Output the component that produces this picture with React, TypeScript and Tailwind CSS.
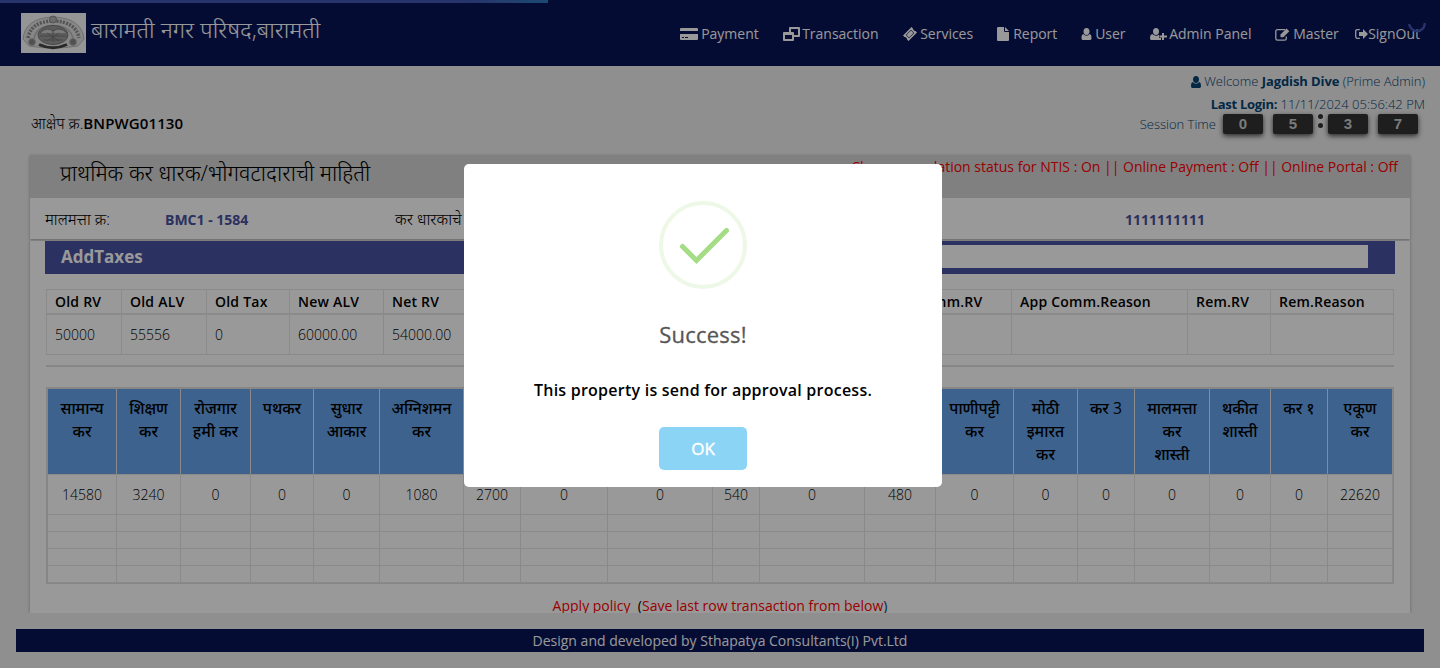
import { Fragment } from 'react';

const nav = 'flex items-center whitespace-nowrap';

function Svg({ w, h, vb, d, className = '' }: { w: number; h: number; vb: string; d: string; className?: string }) {
  return (
    <svg width={w} height={h} viewBox={vb} fill="currentColor" fillRule="evenodd" className={className}>
      <path d={d} />
    </svg>
  );
}

const userPath =
  'M5 0C7 0 8 1.500 8 3.400 8 5.400 6.800 7 5 7S2 5.400 2 3.400C2 1.500 3 0 5 0ZM2 6C2.800 7.200 3.800 7.700 5 7.700S7.200 7.200 8 6C9.600 6.200 10 8 10 10.200 10 11.400 9.300 12 8.300 12H1.700C.7 12 0 11.400 0 10.200 0 8 .4 6.200 2 6Z';

function Nav() {
  return (
    <nav className="mt-px flex h-[66px] text-[14px] leading-5 text-white">
      <span className={nav + ' w-[103px]'}>
        <Svg w={18} h={12} vb="0 0 18 12" className="mr-[3px]" d="M1 0H17Q18 0 18 1V3H0V1Q0 0 1 0ZM0 6H18V11Q18 12 17 12H1Q0 12 0 11ZM2 9V10H4V9ZM5 9V10H8V9Z" />
        Payment
      </span>
      <span className={nav + ' w-[120px]'}>
        <Svg w={17} h={14} vb="0 0 17 14" className="mr-[2px]" d="M7 0H16Q17 0 17 1V9Q17 10 16 10H11V13Q11 14 10 14H1Q0 14 0 13V6Q0 5 1 5H6V1Q6 0 7 0ZM8 2V5H10Q11 5 11 6V8H15V2ZM2 8V12H9V8Z" />
        Transaction
      </span>
      <span className={nav + ' w-[94px]'}>
        <Svg w={14} h={14} vb="0 0 14 14" className="mr-[3px]" d="M8.500 0L10 1.500C9.700 2.500 11.300 4.200 12.500 3.900L14 5.500L5.500 14L4 12.500C4.400 11.400 2.700 9.600 1.500 10L0 8.500ZM8 2.800L2.800 8L6 11.200L11.200 6ZM8 3.600L10.400 6L6 10.400L3.600 8Z" />
        Services
      </span>
      <span className={nav + ' w-[84px]'}>
        <Svg w={12} h={14} vb="0 0 12 14" className="mr-[4px]" d="M0 1Q0 0 1 0H7V4Q7 5 8 5H12V13Q12 14 11 14H1Q0 14 0 13ZM8 0L12 4H8Z" />
        Report
      </span>
      <span className={nav + ' w-[69px]'}>
        <Svg w={11} h={12} vb="0 0 10 12" className="mr-[3px]" d={userPath} />
        User
      </span>
      <span className={nav + ' w-[125px]'}>
        <svg width="17" height="13" viewBox="0 0 17 13" fill="currentColor" className="mr-[2px]">
          <path d="M6 0C8 0 9 1.500 9 3.400 9 5.400 7.800 7 6 7S3 5.400 3 3.400C3 1.500 4 0 6 0ZM2.500 6C3.500 7.200 4.800 7.700 6 7.700S8 7.400 9 6.500V10H11V12H1.700C.7 12 0 11.400 0 10.200 0 8 .7 6.200 2.500 6Z" />
          <path d="M12 5H14V7.500H17V9.500H14V12H12V9.500H9.500V7.500H12Z" />
        </svg>
        Admin Panel
      </span>
      <span className={nav + ' w-[80px]'}>
        <svg width="15" height="13" viewBox="0 0 15 13" fill="none" stroke="currentColor" className="mr-[3px]">
          <path d="M10 1.700H2.500Q.8 1.700.8 3.300V10.500Q.8 12.200 2.500 12.200H9.600Q11.300 12.200 11.300 10.500V8.500" strokeWidth="1.300" />
          <path d="M5.500 6.500L11.500.5L14.300 3.300L8.300 9.300H5.500Z" fill="currentColor" stroke="none" />
        </svg>
        Master
      </span>
      <span className={nav}>
        <svg width="13" height="12" viewBox="0 0 13 12" fill="none" stroke="currentColor">
          <path d="M4.800 1.600H2.400Q.7 1.600.7 3.200V8.800Q.7 10.400 2.400 10.400H4.800" strokeWidth="1.300" />
          <path d="M8 1L13 6L8 11V8H4V4H8Z" fill="currentColor" stroke="none" />
        </svg>
        SignOut
      </span>
    </nav>
  );
}

function Emblem() {
  return (
    <svg width="65" height="40" viewBox="0 0 65 40" className="mt-[13px] shrink-0 bg-[#f8f8f8]">
      <path d="M2 26Q4 5 32 4Q61 5 63 26L57 33Q32 37 8 33Z" fill="#e2e2e2" stroke="#bbb" />
      <path d="M7 25Q10 8.500 32 8Q55 8.500 58 25" fill="none" stroke="#8a8a8a" strokeWidth="3.500" strokeDasharray="2 1.300" />
      <path d="M13 26Q15 13 32 12.500Q50 13 52 26" fill="none" stroke="#b5b5b5" strokeWidth="1.500" />
      <ellipse cx="32" cy="22" rx="15" ry="9.500" fill="#9c9c9c" stroke="#777" />
      <path d="M19 20Q26 13 32 18Q39 13 46 20" fill="#ccc" stroke="#777" />
      <path d="M19 23H45M22 27H42M32 17V29M26 20L38 28M38 20L26 28" stroke="#777" fill="none" strokeWidth="1" />
      <circle cx="32" cy="6.500" r="3.500" fill="#b5b5b5" stroke="#888" />
      <circle cx="11" cy="29" r="3.500" fill="#888" stroke="#b5b5b5" />
      <circle cx="52" cy="29" r="3.500" fill="#888" stroke="#b5b5b5" />
      <path d="M18 31.500Q32 38 46 31.500" stroke="#444" strokeWidth="3" fill="none" />
    </svg>
  );
}

function Digit({ v, className = '' }: { v: string; className?: string }) {
  return (
    <span
      className={
        'flex h-5 w-10 items-center justify-center rounded-[2px] bg-[#333] font-["Liberation_Sans"] text-[15px] font-bold text-[#ccc] shadow-[0_2px_5px_rgba(0,0,0,0.7)] ' +
        className
      }
    >
      {v}
    </span>
  );
}

const taxCols: [string, string, number][] = [
  ['Old RV', '50000', 75],
  ['Old ALV', '55556', 85],
  ['Old Tax', '0', 83],
  ['New ALV', '60000.00', 94],
  ['Net RV', '54000.00', 88],
  ['New Tax', '22620', 75],
  ['Obj.RV', '', 65],
  ['Obj.Reason', '', 95],
  ['Hear.RV', '', 68],
  ['Hear.Reason', '', 101],
  ['App Comm.RV', '', 136],
  ['App Comm.Reason', '', 176],
  ['Rem.RV', '', 83],
  ['Rem.Reason', '', 123],
];

const levies: [string[], string, number][] = [
  [['सामान्य', 'कर'], '14580', 69],
  [['शिक्षण', 'कर'], '3240', 64],
  [['रोजगार', 'हमी कर'], '0', 70],
  [['पथकर'], '0', 63],
  [['सुधार', 'आकार'], '0', 66],
  [['अग्निशमन', 'कर'], '1080', 84],
  [['वृक्ष', 'कर'], '2700', 57],
  [['जललाभ', 'कर'], '0', 87],
  [['मलप्रवाह', 'कर'], '0', 105],
  [['दिवा', 'कर'], '540', 47],
  [['स्वच्छता', 'कर'], '0', 105],
  [['शासन', 'कर'], '480', 71],
  [['पाणीपट्टी', 'कर'], '0', 78],
  [['मोठी', 'इमारत', 'कर'], '0', 64],
  [['कर 3'], '0', 57],
  [['मालमत्ता', 'कर', 'शास्ती'], '0', 75],
  [['थकीत', 'शास्ती'], '0', 61],
  [['कर १'], '0', 57],
  [['एकूण', 'कर'], '22620', 65],
];

function AssessmentTable() {
  return (
    <table className="w-[1348px] table-fixed border-separate border-spacing-0 border-t border-l border-[#e7e7e7] text-[14px] leading-5">
      <colgroup>
        {taxCols.map((c) => (
          <col key={c[0]} style={{ width: c[2] }} />
        ))}
      </colgroup>
      <tbody>
        <tr className="h-[25px]">
          {taxCols.map((c) => (
            <th key={c[0]} className="border-r border-b-2 border-[#e7e7e7] p-0 pl-2 text-left font-semibold tracking-[0.22px] whitespace-nowrap">
              {c[0]}
            </th>
          ))}
        </tr>
        <tr className="h-10">
          {taxCols.map((c) => (
            <td key={c[0]} className="border-r border-b border-[#e7e7e7] p-0 pt-px pl-2 font-light">
              {c[1]}
            </td>
          ))}
        </tr>
      </tbody>
    </table>
  );
}

function LevyTable() {
  return (
    <table className="w-[1348px] table-fixed border-separate border-spacing-0 border-2 border-r border-b border-[#e0e0e0] text-center text-[14px]">
      <colgroup>
        {levies.map((c, i) => (
          <col key={i} style={{ width: c[2] }} />
        ))}
      </colgroup>
      <tbody>
        <tr className="h-[86px]">
          {levies.map((c, i) => (
            <th key={i} className="border-r border-b border-[#e7e7e7] bg-[#66a3ed] p-0 pt-2 align-top text-[15.700px] leading-[23px] font-medium whitespace-nowrap">
              {c[0].map((l, j) => (
                <Fragment key={j}>
                  {j > 0 && <br />}
                  {l}
                </Fragment>
              ))}
            </th>
          ))}
        </tr>
        <tr className="h-10">
          {levies.map((c, i) => (
            <td key={i} className="border-r border-b border-[#e7e7e7] p-0 pt-px leading-5 font-light">
              {c[1]}
            </td>
          ))}
        </tr>
        {[0, 1, 2, 3].map((r) => (
          <tr key={r} className="h-[17px]">
            {levies.map((_, i) => (
              <td key={i} className="border-r border-b border-[#e7e7e7] p-0" />
            ))}
          </tr>
        ))}
      </tbody>
    </table>
  );
}

function Dialog() {
  return (
    <div className="fixed inset-0 z-20 bg-black/40">
      <div className="absolute top-[164px] left-[464px] flex h-[323px] w-[478px] flex-col items-center rounded-[5px] bg-white">
        <svg width="88" height="88" viewBox="0 0 88 88" fill="none" className="mt-[37px]">
          <circle cx="44" cy="44" r="42" stroke="#edf8e7" strokeWidth="4" />
          <path d="M23.500 45.500L37.500 59.500L67.500 29.500" stroke="#a5dc86" strokeWidth="5" strokeLinecap="round" />
        </svg>
        <h2 className="mt-[29px] text-[22px] leading-8 font-medium tracking-[0.2px] text-[#575757] [-webkit-text-stroke:0.3px_#575757]">Success!</h2>
        <p className="mt-[28px] text-[16px] leading-6 font-semibold tracking-[0.24px] text-black">This property is send for approval process.</p>
        <button className="mt-[25px] h-[43px] w-[88px] rounded-[5px] bg-[#8cd4f5] text-[17px] font-medium text-white [-webkit-text-stroke:0.4px_#fff]">OK</button>
      </div>
    </div>
  );
}

export default function App() {
  return (
    <div className='relative h-[668px] w-[1440px] overflow-hidden bg-[#eee] font-["Open_Sans","Noto_Sans_Devanagari",sans-serif] text-[14px] text-black'>
      <header className="flex h-[66px] justify-between bg-[#081458] pr-5 pl-[21px]">
        <div className="flex">
          <Emblem />
          <span className="mt-[13px] ml-[5px] text-[23.100px] leading-8 font-light whitespace-nowrap text-white">बारामती नगर परिषद,बारामती</span>
        </div>
        <Nav />
        <div className="absolute top-0 left-0 h-[3px] w-[548px] bg-linear-to-r from-[#4155b2] from-85% to-[#2d7cc0]" />
        <svg width="18" height="12" viewBox="0 0 18 12" fill="none" className="absolute top-[21px] left-[1408px]">
          <path d="M1 3Q3 10 9 10Q16 10 17 2" stroke="#4155b2" strokeWidth="2.500" />
        </svg>
      </header>

      <section className="flex h-[89px] justify-between pr-[15px] pl-[31px]">
        <div className="pt-[47px] text-[15.300px] leading-5 font-light">
          आक्षेप क्र.<b className="text-[15px] font-semibold tracking-[0.1px]">BNPWG01130</b>
        </div>
        <div className="flex flex-col items-end pt-[6px] text-[13px] font-light text-[#064474]">
          <div className="flex h-5 items-center whitespace-nowrap">
            <Svg w={10} h={12} vb="0 0 10 12" className="mr-[3px]" d={userPath} />
            <span>
              Welcome <b className="font-bold tracking-[-0.1px]">Jagdish Dive</b> (Prime Admin)
            </span>
          </div>
          <div className="mt-[2px] h-5 leading-5 whitespace-nowrap">
            <b className="font-bold tracking-[-0.3px]">Last Login:</b> 11/11/2024 05:56:42 PM
          </div>
          <div className="mr-[7px] flex h-5 items-center whitespace-nowrap">
            <span className="mt-0.5 mr-[7px]">Session Time</span>
            <Digit v="0" />
            <Digit v="5" className="ml-[10px]" />
            <span className="mx-[5px] flex h-[22px] w-[5px] flex-col gap-1 self-start">
              <i className="size-[5px] rounded-full bg-[#333]" />
              <i className="size-[5px] rounded-full bg-[#333]" />
            </span>
            <Digit v="3" />
            <Digit v="7" className="ml-[10px]" />
          </div>
        </div>
      </section>

      <main className="mx-[30px] h-[458px]">
        <section className="h-[84px] bg-white shadow-[0_1px_3px_rgba(0,0,0,0.3)]">
          <div className="flex h-[43px] justify-between bg-[#d5d5d5] pr-3 pl-[30px]">
            <h1 className="pt-[2px] text-[21.600px] leading-8 font-light">प्राथमिक कर धारक/भोगवटादाराची माहिती</h1>
            <p className="pt-[2px] leading-5 text-[#f00]">Change regulation status for NTIS : On || Online Payment : Off || Online Portal : Off</p>
          </div>
          <div className="flex h-[41px] items-center pt-[2px] pl-[15px] leading-5">
            <span className="w-[120px] pb-[2px] text-[15.700px] font-light">मालमत्ता क्र:</span>
            <b className="w-[230px] font-bold text-[#4852a0]">BMC1 - 1584</b>
            <span className="w-[730px] pb-[2px] text-[16px] font-light">कर धारकाचे नाव:</span>
            <b className="text-[#4852a0]">1111111111</b>
          </div>
        </section>
        <section className="mt-[2px] h-[372px] bg-white px-[15px] shadow-[0_0_3px_rgba(0,0,0,0.3)] [clip-path:inset(0_-4px)]">
          <div className="flex h-[33px] items-start justify-between bg-[#4852a0] pr-[27px] pl-[16px]">
            <h2 className="text-[17px] leading-8 font-bold text-white">AddTaxes</h2>
            <div className="mt-1 h-[23px] w-[600px] bg-white" />
          </div>
          <div className="px-px pt-[15px]">
            <AssessmentTable />
            <hr className="mt-[10px] mb-[20px] border-t-2 border-[#dde0e3]" />
            <LevyTable />
            <p className="mt-3 text-center leading-5 text-[#f00]">
              Apply policy&nbsp; <span className="text-black">(</span>Save last row transaction from below<span className="text-[#064474]">)</span>
            </p>
          </div>
        </section>
      </main>
      <footer className="mx-4 mt-4 h-[23px] bg-[#081458] text-center text-[14px] leading-[23px] text-white">
        Design and developed by Sthapatya Consultants(I) Pvt.Ltd
      </footer>
      <Dialog />
    </div>
  );
}
